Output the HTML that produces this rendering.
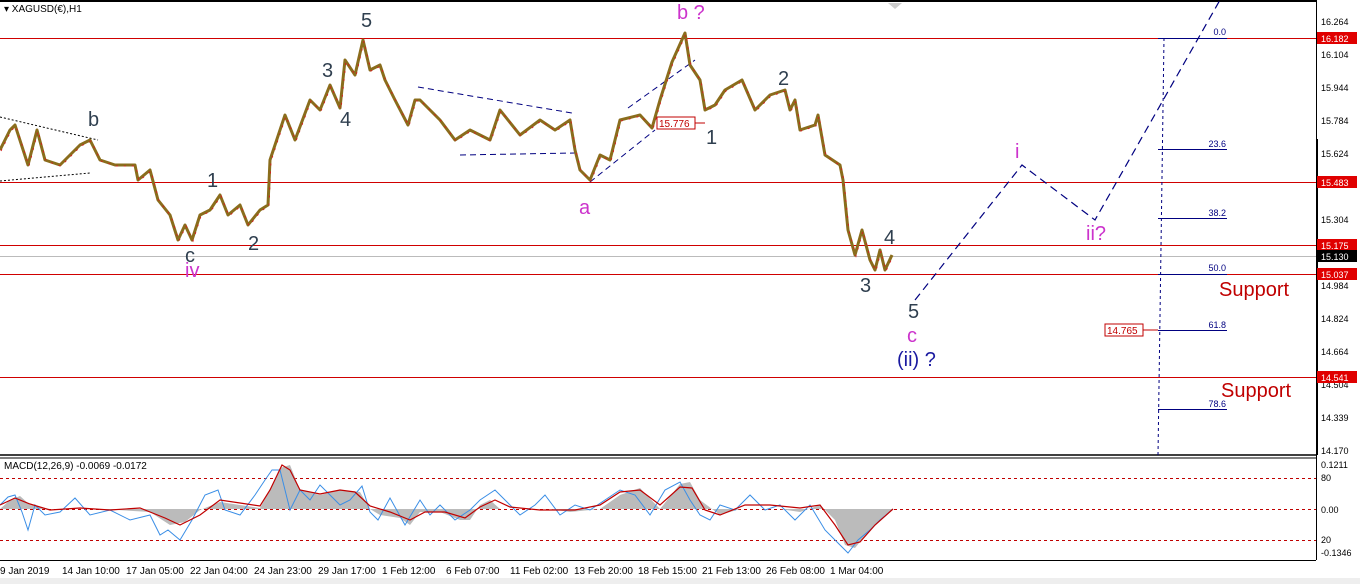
<!DOCTYPE html>
<html><head><meta charset="utf-8"><style>
html,body{margin:0;padding:0;background:#fff;width:1360px;height:584px;overflow:hidden}
svg{display:block;font-family:"Liberation Sans",sans-serif}
</style></head><body>
<svg width="1360" height="584" viewBox="0 0 1360 584" xmlns="http://www.w3.org/2000/svg">
<rect width="1360" height="584" fill="#fff"/>
<line x1="0" y1="1" x2="1316" y2="1" stroke="#000" stroke-width="2"/>
<line x1="1316.5" y1="0" x2="1316.5" y2="560" stroke="#000"/>
<line x1="0" y1="455" x2="1316" y2="455" stroke="#000" stroke-width="1.5"/>
<line x1="0" y1="458" x2="1316" y2="458" stroke="#000"/>
<line x1="0" y1="560.5" x2="1316" y2="560.5" stroke="#000"/>
<rect x="0" y="578" width="1360" height="6" fill="#eee"/>
<polygon points="888,3 902,3 895,9" fill="#ccc"/>
<text x="4" y="12" font-size="10" fill="#000">▾ XAGUSD(€),H1</text>
<g stroke="#d00000" stroke-width="1">
<line x1="0" y1="38.5" x2="1316" y2="38.5"/>
<line x1="0" y1="182.5" x2="1316" y2="182.5"/>
<line x1="0" y1="245.5" x2="1316" y2="245.5"/>
<line x1="0" y1="274.5" x2="1316" y2="274.5"/>
<line x1="0" y1="377.5" x2="1316" y2="377.5"/>
</g>
<line x1="0" y1="256.5" x2="1316" y2="256.5" stroke="#bbb"/>
<g stroke="#000080" stroke-width="1">
<line x1="1158" y1="38.5" x2="1227" y2="38.5"/>
<line x1="1158" y1="149.5" x2="1227" y2="149.5"/>
<line x1="1158" y1="218.5" x2="1227" y2="218.5"/>
<line x1="1158" y1="274.5" x2="1227" y2="274.5"/>
<line x1="1158" y1="330.5" x2="1227" y2="330.5"/>
<line x1="1158" y1="409.5" x2="1227" y2="409.5"/>
<line x1="1164" y1="38" x2="1158" y2="455" stroke-dasharray="3,3"/>
</g>
<g font-size="9" fill="#000080" text-anchor="end">
<text x="1226" y="35">0.0</text><text x="1226" y="147">23.6</text><text x="1226" y="216">38.2</text>
<text x="1226" y="271">50.0</text><text x="1226" y="328">61.8</text><text x="1226" y="407">78.6</text>
</g>
<g stroke="#000080" stroke-width="1" fill="none" stroke-dasharray="6,4">
<line x1="0" y1="117" x2="98" y2="140" stroke="#000" stroke-dasharray="2,2"/>
<line x1="0" y1="181" x2="90" y2="173" stroke="#000" stroke-dasharray="2,2"/>
<line x1="418" y1="87" x2="572" y2="113"/>
<line x1="460" y1="155" x2="575" y2="153"/>
<line x1="590" y1="182" x2="655" y2="130"/>
<line x1="628" y1="108" x2="695" y2="60"/>
</g>
<polyline points="915,300 1022,165 1095,220 1220,0" fill="none" stroke="#000080" stroke-width="1.2" stroke-dasharray="8,5"/>
<polyline fill="none" stroke="#8a6d1c" stroke-width="3" stroke-linejoin="round" points="0,150 10,130 15,125 28,165 37,130 45,160 60,165 80,145 90,140 100,160 115,165 135,165 138,180 150,170 158,200 170,215 178,240 185,225 192,240 200,215 210,210 220,195 228,215 240,205 248,225 260,210 268,205 270,160 285,115 295,140 310,100 320,110 330,85 340,108 345,60 355,75 363,40 370,70 380,65 385,80 395,100 408,125 415,100 420,100 440,120 455,140 470,130 490,140 500,110 520,135 540,120 555,130 570,120 575,150 580,170 590,180 600,155 610,160 620,120 640,115 652,128 660,100 672,62 685,33 690,65 700,80 705,110 715,105 725,90 742,80 755,110 770,95 785,90 790,110 795,100 800,130 815,125 818,115 825,155 840,165 843,180 848,230 855,255 862,230 870,260 875,270 880,250 885,270 892,255"/>
<polyline fill="none" stroke="#d02020" stroke-width="1" stroke-dasharray="2,6" transform="translate(1,1)" points="0,150 10,130 15,125 28,165 37,130 45,160 60,165 80,145 90,140 100,160 115,165 135,165 138,180 150,170 158,200 170,215 178,240 185,225 192,240 200,215 210,210 220,195 228,215 240,205 248,225 260,210 268,205 270,160 285,115 295,140 310,100 320,110 330,85 340,108 345,60 355,75 363,40 370,70 380,65 385,80 395,100 408,125 415,100 420,100 440,120 455,140 470,130 490,140 500,110 520,135 540,120 555,130 570,120 575,150 580,170 590,180 600,155 610,160 620,120 640,115 652,128 660,100 672,62 685,33 690,65 700,80 705,110 715,105 725,90 742,80 755,110 770,95 785,90 790,110 795,100 800,130 815,125 818,115 825,155 840,165 843,180 848,230 855,255 862,230 870,260 875,270 880,250 885,270 892,255"/>
<rect x="657" y="117" width="38" height="12" fill="#fff" stroke="#c00000"/>
<text x="659" y="127" font-size="10" fill="#c00000">15.776</text>
<line x1="695" y1="123" x2="705" y2="123" stroke="#c00000"/>
<g font-size="20" fill="#2f3f4f">
<text x="361" y="27">5</text><text x="322" y="77">3</text><text x="340" y="126">4</text>
<text x="88" y="126">b</text><text x="207" y="187">1</text><text x="248" y="250">2</text>
<text x="185" y="262">c</text><text x="706" y="144">1</text><text x="778" y="85">2</text>
<text x="884" y="244">4</text><text x="860" y="292">3</text><text x="908" y="318">5</text>
</g>
<g font-size="20" fill="#cc33cc">
<text x="677" y="19">b ?</text><text x="579" y="214">a</text><text x="185" y="277">iv</text>
<text x="1015" y="158">i</text><text x="1086" y="240">ii?</text><text x="907" y="342">c</text>
</g>
<text x="897" y="366" font-size="20" fill="#1a1aa0">(ii) ?</text>
<text x="1219" y="296" font-size="20" fill="#c00000">Support</text>
<text x="1221" y="397" font-size="20" fill="#c00000">Support</text>
<rect x="1105" y="324" width="38" height="12" fill="#fff" stroke="#c00000"/>
<text x="1107" y="334" font-size="10" fill="#c00000">14.765</text>
<line x1="1143" y1="330" x2="1158" y2="330" stroke="#c00000"/>
<g font-size="9" fill="#000">
<text x="1321" y="25">16.264</text><text x="1321" y="58">16.104</text><text x="1321" y="91">15.944</text>
<text x="1321" y="124">15.784</text><text x="1321" y="157">15.624</text><text x="1321" y="223">15.304</text>
<text x="1321" y="289">14.984</text><text x="1321" y="322">14.824</text><text x="1321" y="355">14.664</text>
<text x="1321" y="388">14.504</text><text x="1321" y="421">14.339</text><text x="1321" y="454">14.170</text>
<text x="1321" y="468">0.1211</text><text x="1321" y="481">80</text><text x="1321" y="513">0.00</text>
<text x="1321" y="543">20</text><text x="1321" y="556">-0.1346</text>
</g>
<rect x="1316" y="139" width="2" height="316" fill="#000"/>
<g font-size="9" fill="#fff">
<rect x="1317" y="32" width="40" height="12" fill="#e00000"/><text x="1321" y="42">16.182</text>
<rect x="1317" y="176" width="40" height="12" fill="#e00000"/><text x="1321" y="186">15.483</text>
<rect x="1317" y="239" width="40" height="12" fill="#e00000"/><text x="1321" y="249">15.175</text>
<rect x="1317" y="250" width="40" height="12" fill="#000"/><text x="1321" y="260">15.130</text>
<rect x="1317" y="268" width="40" height="12" fill="#e00000"/><text x="1321" y="278">15.037</text>
<rect x="1317" y="371" width="40" height="12" fill="#e00000"/><text x="1321" y="381">14.541</text>
</g>
<text x="4" y="469" font-size="10" fill="#000">MACD(12,26,9) -0.0069 -0.0172</text>
<g stroke="#c00000" stroke-dasharray="3,3">
<line x1="0" y1="478.5" x2="1316" y2="478.5"/><line x1="0" y1="509.5" x2="1316" y2="509.5"/><line x1="0" y1="540.5" x2="1316" y2="540.5"/>
</g>
<path fill="#bbb" d="M0,509 L10,500 20,496 30,505 50,509 100,509 150,512 170,525 185,522 200,510 220,502 240,505 260,508 270,490 280,468 290,465 300,490 320,495 340,490 360,492 370,509 380,515 400,518 410,525 420,512 440,512 460,520 470,520 480,505 490,500 500,509 550,509 570,512 600,509 620,495 640,488 660,509 680,484 690,482 700,500 720,515 740,509 780,509 800,512 820,505 835,520 845,545 855,548 870,530 885,515 893,509 Z"/>
<polyline fill="none" stroke="#3a8ee6" stroke-width="1" points="0,505 8,497 15,495 22,512 28,530 35,505 45,515 60,512 75,498 90,515 110,510 130,520 150,515 160,535 168,530 180,540 192,520 205,495 218,490 225,510 240,515 255,495 265,480 272,470 280,470 290,510 300,490 310,500 320,485 330,495 340,505 350,500 362,486 370,512 378,520 390,498 405,525 420,500 430,515 440,505 455,520 470,510 480,500 495,490 505,500 520,515 535,505 545,495 560,515 575,505 590,510 605,500 620,490 635,495 650,515 665,490 680,482 690,500 700,515 710,520 720,505 735,510 750,495 765,510 780,505 795,520 810,505 825,530 840,545 848,553 858,540 870,530 880,520 893,509"/>
<polyline fill="none" stroke="#c00000" stroke-width="1.2" points="0,505 15,498 30,504 50,510 80,508 110,510 140,508 165,518 180,525 200,515 220,500 240,503 260,506 270,490 282,465 290,470 300,490 320,494 340,490 355,492 370,506 390,512 410,520 425,512 445,512 465,518 480,507 495,500 510,507 540,510 575,510 600,505 620,492 640,490 660,505 680,487 692,488 705,510 720,515 745,505 770,505 800,508 820,505 835,525 848,545 860,542 875,525 893,509"/>
<g font-size="10" fill="#000">
<text x="0" y="574">9 Jan 2019</text><text x="62" y="574">14 Jan 10:00</text><text x="126" y="574">17 Jan 05:00</text>
<text x="190" y="574">22 Jan 04:00</text><text x="254" y="574">24 Jan 23:00</text><text x="318" y="574">29 Jan 17:00</text>
<text x="382" y="574">1 Feb 12:00</text><text x="446" y="574">6 Feb 07:00</text><text x="510" y="574">11 Feb 02:00</text>
<text x="574" y="574">13 Feb 20:00</text><text x="638" y="574">18 Feb 15:00</text><text x="702" y="574">21 Feb 13:00</text>
<text x="766" y="574">26 Feb 08:00</text><text x="830" y="574">1 Mar 04:00</text>
</g>
</svg>
</body></html>
